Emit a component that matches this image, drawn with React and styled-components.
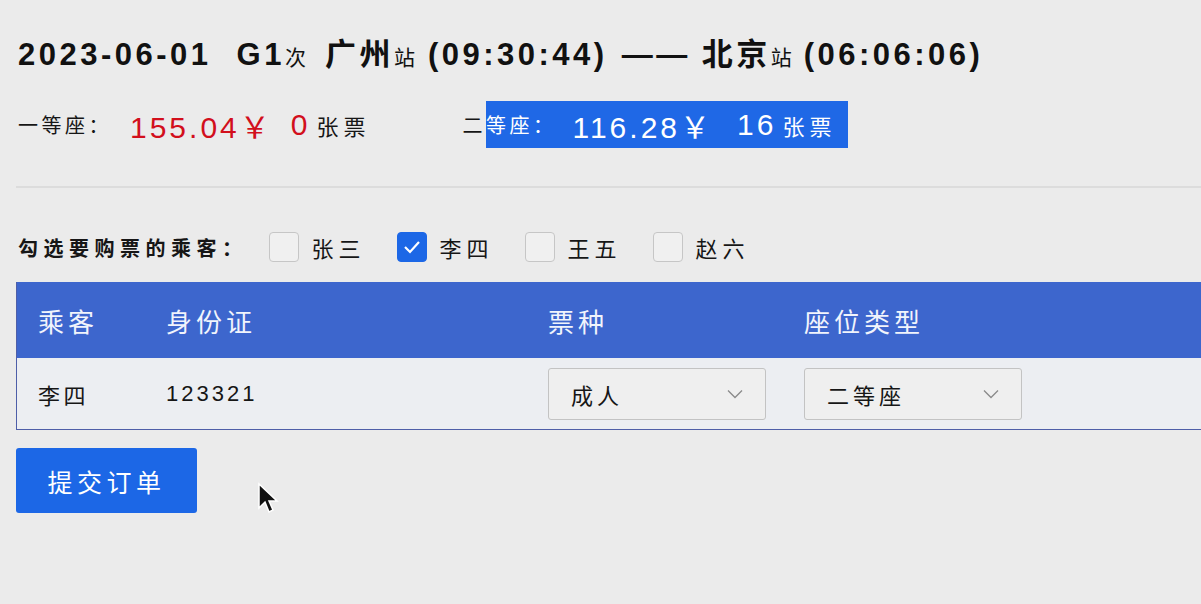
import React from 'react';
import styled, { createGlobalStyle } from 'styled-components';

const GlobalStyle = createGlobalStyle`
  html, body {
    margin: 0;
    padding: 0;
    overflow: hidden;
    background: #ebebeb;
  }
  body {
    font-family: "Liberation Sans", "Noto Sans CJK SC", sans-serif;
    color: #161616;
  }
`;

const colors = {
  text: '#161616',
  red: '#d20f1c',
  blue: '#1c67e6',
  header: '#3d66cd',
  rowBg: '#eceef2',
  border: '#4e5ea8',
  selectBorder: '#c3c3c3',
};

const Page = styled.main`
  position: relative;
  display: flex;
  flex-direction: column;
  width: 1240px;
  padding: 35px 0 0 16px;
  box-sizing: border-box;
`;

const Title = styled.h1`
  display: flex;
  align-items: baseline;
  height: 40px;
  margin: 0;
  padding-left: 2px;
  font-size: 31px;
  line-height: 40px;
  font-weight: 700;
  letter-spacing: 3.5px;
  color: #111;
  white-space: nowrap;
`;

const Small = styled.span`
  font-size: 21px;
  font-weight: 400;
  letter-spacing: 0;
`;

const Gap = styled.span`
  display: inline-block;
  width: ${(p) => p.$w}px;
`;

const PriceRow = styled.div`
  display: flex;
  align-items: center;
  height: 47px;
  margin-top: 26px;
  padding-left: 2px;
`;

const PriceGroup = styled.div`
  display: flex;
  align-items: center;
  height: 100%;
  margin-right: ${(p) => p.$mr || 0}px;
`;

const SeatLabel = styled.span`
  font-size: 20px;
  letter-spacing: 3.5px;
`;

const Price = styled.span`
  margin-left: ${(p) => p.$ml || 0}px;
  font-size: 30px;
  letter-spacing: 3px;
  color: ${(p) => (p.$selected ? '#fff' : colors.red)};
`;

const Unit = styled.span`
  margin-left: 6px;
  font-size: 22px;
  letter-spacing: 5px;
`;

const Selected = styled.span`
  display: inline-flex;
  align-items: center;
  height: 47px;
  padding-right: 12px;
  background: #1f68e6;
  color: #fff;
`;

const Divider = styled.hr`
  width: 100%;
  height: 2px;
  margin: 38px 0 0;
  border: none;
  background: #dcdcdc;
`;

const PassengerRow = styled.div`
  display: flex;
  align-items: center;
  height: 30px;
  margin-top: 44px;
  padding-left: 2px;
`;

const PassengerTitle = styled.span`
  margin-right: 21px;
  font-size: 20px;
  font-weight: 700;
  letter-spacing: 5.5px;
`;

const Option = styled.label`
  display: flex;
  align-items: center;
  width: 128px;
  font-size: 22px;
  letter-spacing: 5px;
`;

const Box = styled.span`
  display: flex;
  align-items: center;
  justify-content: center;
  width: 28px;
  height: 28px;
  margin-right: 13px;
  border: 1px solid ${(p) => (p.$checked ? colors.blue : '#c6c6c6')};
  border-radius: 4px;
  background: ${(p) => (p.$checked ? colors.blue : '#f0f0f0')};
`;

const Table = styled.div`
  margin-top: 20px;
  border-left: 1px solid ${colors.border};
  border-bottom: 1px solid ${colors.border};
`;

const Row = styled.div`
  display: grid;
  grid-template-columns: 128px 382px 256px 1fr;
  align-items: center;
  height: ${(p) => (p.$head ? 76 : 71)}px;
  padding-left: 21px;
  background: ${(p) => (p.$head ? colors.header : colors.rowBg)};
  color: ${(p) => (p.$head ? '#f1f4fc' : colors.text)};
  font-size: ${(p) => (p.$head ? 26 : 22)}px;
  letter-spacing: ${(p) => (p.$head ? 4 : 3.5)}px;
`;

const IdNumber = styled.span`
  letter-spacing: 3px;
`;

const Select = styled.div`
  display: flex;
  align-items: center;
  justify-content: space-between;
  box-sizing: border-box;
  width: 218px;
  height: 52px;
  padding: 0 22px;
  border: 1px solid ${colors.selectBorder};
  border-radius: 3px;
  background: #efefef;
  font-size: 22px;
  letter-spacing: 4px;
`;

const SubmitButton = styled.button`
  width: 181px;
  height: 65px;
  margin-top: 18px;
  padding-left: 6px;
  border: none;
  border-radius: 3px;
  background: ${colors.blue};
  color: #fff;
  font-family: inherit;
  font-size: 25px;
  letter-spacing: 4.5px;
`;

const Cursor = styled.svg`
  position: absolute;
  left: 256px;
  top: 482px;
  filter: blur(0.6px);
`;

const Chevron = () => (
  <svg width="16" height="10" viewBox="0 0 16 10">
    <path d="M1 1.5 L8 8.5 L15 1.5" fill="none" stroke="#8a8a8a" strokeWidth="1.3" />
  </svg>
);

const Check = () => (
  <svg width="18" height="14" viewBox="0 0 18 14">
    <path d="M2 7 L7 12 L16 2" fill="none" stroke="#fff" strokeWidth="2.2" />
  </svg>
);

const passengers = [
  { name: '张三', checked: false },
  { name: '李四', checked: true },
  { name: '王五', checked: false },
  { name: '赵六', checked: false },
];

const App = () => (
  <>
    <GlobalStyle />
    <Page>
      <Title>
        2023-06-01<Gap $w={25} />G1<Small>次</Small><Gap $w={19} />广州<Small>站</Small>
        <Gap $w={13} />(09:30:44)<Gap $w={14} />——<Gap $w={11} />北京<Small>站</Small>
        <Gap $w={12} />(06:06:06)
      </Title>

      <PriceRow>
        <PriceGroup $mr={92}>
          <SeatLabel>一等座：</SeatLabel>
          <Price $ml={18}>155.04￥</Price>
          <Price $ml={18}>0</Price>
          <Unit>张票</Unit>
        </PriceGroup>
        <PriceGroup>
          <SeatLabel>二</SeatLabel>
          <Selected>
            <SeatLabel>等座：</SeatLabel>
            <Price $ml={16} $selected>116.28￥</Price>
            <Price $ml={24} $selected>16</Price>
            <Unit>张票</Unit>
          </Selected>
        </PriceGroup>
      </PriceRow>

      <Divider />

      <PassengerRow>
        <PassengerTitle>勾选要购票的乘客：</PassengerTitle>
        {passengers.map((p) => (
          <Option key={p.name}>
            <Box $checked={p.checked}>{p.checked ? <Check /> : null}</Box>
            {p.name}
          </Option>
        ))}
      </PassengerRow>

      <Table>
        <Row $head>
          <span>乘客</span>
          <span>身份证</span>
          <span>票种</span>
          <span>座位类型</span>
        </Row>
        <Row>
          <span>李四</span>
          <IdNumber>123321</IdNumber>
          <Select>
            成人
            <Chevron />
          </Select>
          <Select>
            二等座
            <Chevron />
          </Select>
        </Row>
      </Table>

      <div>
        <SubmitButton type="button">提交订单</SubmitButton>
      </div>

      <Cursor width="24" height="36" viewBox="0 0 24 36">
        <path d="M3 2 L3 26 L9 20 L13 30 L17 28 L13 19 L21 19 Z" fill="#111" stroke="#fff" strokeWidth="1.5" />
      </Cursor>
    </Page>
  </>
);

export default App;
